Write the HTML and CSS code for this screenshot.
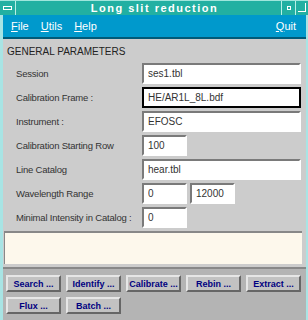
FILE: index.html
```html
<!DOCTYPE html>
<html lang="en">
<head>
  <meta charset="UTF-8">
  <title>Long slit reduction</title>
  <link rel="stylesheet" href="styles.css">
</head>
<body>

  <div class="titlebar">
    <div class="tb-box tb-menu"><span class="tb-bar"></span></div>
    <div class="tb-title">Long slit reduction</div>
    <div class="tb-box tb-min"><span class="tb-dot"></span></div>
    <div class="tb-box tb-max"><span class="tb-corner"></span></div>
  </div>

  <div class="window">
    <div class="menubar">
      <span class="menu-item"><u>F</u>ile</span>
      <span class="menu-item"><u>U</u>tils</span>
      <span class="menu-item"><u>H</u>elp</span>
      <span class="menu-item menu-quit"><u>Q</u>uit</span>
    </div>

    <div class="params">
      <div class="section-title">GENERAL PARAMETERS</div>
      <div class="row">
        <label class="label">Session</label>
        <input class="field" type="text" value="ses1.tbl">
      </div>
      <div class="row">
        <label class="label">Calibration Frame :</label>
        <input class="field focused" type="text" value="HE/AR1L_8L.bdf">
      </div>
      <div class="row">
        <label class="label">Instrument :</label>
        <input class="field" type="text" value="EFOSC">
      </div>
      <div class="row">
        <label class="label">Calibration Starting Row</label>
        <input class="field short" type="text" value="100">
      </div>
      <div class="row">
        <label class="label">Line Catalog</label>
        <input class="field" type="text" value="hear.tbl">
      </div>
      <div class="row">
        <label class="label">Wavelength Range</label>
        <input class="field short" type="text" value="0">
        <input class="field short" type="text" value="12000">
      </div>
      <div class="row">
        <label class="label">Minimal Intensity in Catalog :</label>
        <input class="field short" type="text" value="0">
      </div>
    </div>

    <div class="log-wrap">
      <div class="log"></div>
    </div>

    <div class="actions">
      <button class="action">Search ...</button>
      <button class="action">Identify ...</button>
      <button class="action">Calibrate ...</button>
      <button class="action">Rebin ...</button>
      <button class="action">Extract ...</button>
      <button class="action">Flux ...</button>
      <button class="action">Batch ...</button>
    </div>
  </div>

</body>
</html>
```

FILE: styles.css
```css
body {
  margin: 0;
  width: 308px;
  height: 320px;
  overflow: hidden;
  font-family: "Liberation Sans", Arial, sans-serif;
  background-color: #a8e4e4;
}
.titlebar {
  display: flex;
  height: 15px;
  background-color: #22b0a2;
  border-top: 1px solid #9fe6dc;
  box-sizing: border-box;
}
.tb-box {
  position: relative;
  width: 13px;
  border-left: 1px solid #b8efe6;
}
.tb-menu {
  width: 15px;
  border-left: none;
  border-right: 1px solid #b8efe6;
}
.tb-bar {
  position: absolute;
  left: 3px;
  top: 5px;
  width: 7px;
  height: 2px;
  border: 1px solid #ffffff;
}
.tb-dot {
  position: absolute;
  left: 5px;
  top: 5px;
  width: 2px;
  height: 2px;
  border: 1px solid #ffffff;
}
.tb-corner {
  position: absolute;
  right: 2px;
  top: 2px;
  width: 7px;
  height: 8px;
  border-right: 1px solid #ffffff;
  border-bottom: 1px solid #ffffff;
}
.tb-max {
  width: 12px;
}
.tb-title {
  flex: 1;
  text-align: center;
  color: #ffffff;
  font-weight: bold;
  font-size: 11px;
  line-height: 14px;
  letter-spacing: 1.5px;
  padding-left: 12px;
}
.window {
  border-left: 3px solid #a8e4e4;
  border-right: 2px solid #a8e4e4;
  border-bottom: 1px solid #a8e4e4;
  background-color: #cccccc;
}
.menubar {
  display: flex;
  height: 22px;
  align-items: center;
  padding-left: 8px;
  background-color: #0099cc;
  border-bottom: 2px solid #005a78;
  color: #ffffff;
  font-size: 11px;
}
.menu-item {
  margin-right: 12px;
}
.menu-quit {
  margin-left: auto;
  margin-right: 10px;
}
.params {
  padding: 5px 0 0 4px;
}
.section-title {
  height: 16px;
  line-height: 16px;
  font-size: 10px;
  color: #222222;
  margin-bottom: 3px;
}
.row {
  display: flex;
  align-items: center;
  height: 21px;
  margin-bottom: 3px;
}
.label {
  width: 126px;
  padding-left: 9px;
  box-sizing: border-box;
  flex-shrink: 0;
  white-space: nowrap;
  font-size: 9.5px;
  letter-spacing: -0.2px;
  color: #333333;
}
.field {
  box-sizing: border-box;
  width: 159px;
  height: 21px;
  margin: 0 0 0 9px;
  padding: 0 4px;
  border: 2px solid;
  border-color: #7a7a7a #ffffff #ffffff #7a7a7a;
  background-color: #ffffff;
  font-family: "Liberation Sans", Arial, sans-serif;
  font-size: 10px;
  color: #333333;
}
.field.short {
  width: 45px;
}
.field.short + .field.short {
  margin-left: 3px;
}
.field.focused {
  border-color: #000000;
}
.log-wrap {
  padding: 0 4px 3px 1px;
  border-bottom: 2px solid #888888;
}
.log {
  height: 31px;
  background-color: #fdf8ec;
  border-top: 2px solid #888888;
  border-left: 1px solid #888888;
}
.actions {
  display: grid;
  grid-template-columns: repeat(5, 55px);
  column-gap: 5px;
  row-gap: 5px;
  padding: 6px 0 8px 3px;
  background-color: #b4b4b4;
}
.action {
  height: 17px;
  padding: 0;
  border: 2px solid;
  border-color: #e6e6e6 #666666 #666666 #e6e6e6;
  background-color: #c2c2c2;
  color: #000080;
  font-family: "Liberation Sans", Arial, sans-serif;
  font-weight: bold;
  font-size: 9px;
  white-space: nowrap;
}
```
